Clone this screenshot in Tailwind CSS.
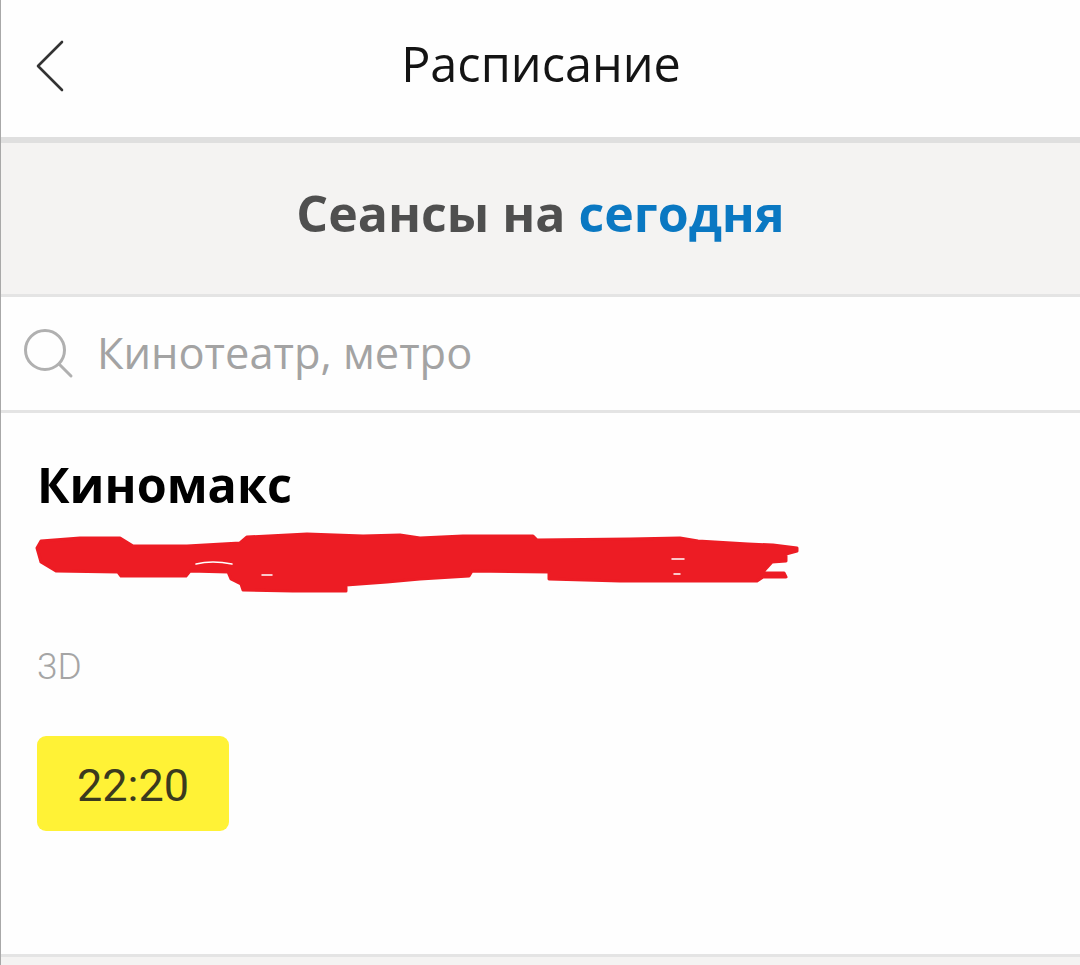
<!DOCTYPE html>
<html lang="ru"><head><meta charset="utf-8">
<script src="https://cdn.jsdelivr.net/npm/@tailwindcss/browser@4"></script>
</head>
<body class="bg-white">
<div class="h-[965px] w-[1080px] overflow-hidden flex flex-col border-l-[1px] border-[#a8a8a8] bg-[#fefefe] font-['Roboto',sans-serif]">
  <header class="h-[143px] shrink-0 flex items-center justify-center relative border-b-[6px] border-[#dfdfdf]">
    <svg class="absolute left-[34px] top-[39px]" width="30" height="54" viewBox="0 0 30 54" fill="none" stroke="#333" stroke-width="2.6" stroke-linecap="round" stroke-linejoin="round"><path d="M27 3 L3 27 L27 51"/></svg>
    <h1 class="font-['Open_Sans',sans-serif] text-[48.6px] leading-none text-[#141414] font-normal -mt-[10px] ml-[1px]">Расписание</h1>
  </header>
  <section class="h-[154px] shrink-0 bg-[#f4f3f2] border-b-[3px] border-[#e4e4e4] flex items-center justify-center">
    <h2 class="font-['Open_Sans',sans-serif] text-[50px] leading-none font-bold text-[#4f4f4f] -mt-[11px]">Сеансы на <span class="text-[#0a78c2]">сегодня</span></h2>
  </section>
  <div class="h-[116px] shrink-0 border-b-[3px] border-[#e4e4e4] flex items-center pl-[23px] gap-[23px]">
    <svg width="50" height="50" viewBox="0 0 50 50" fill="none" stroke="#b0b0b0" stroke-width="3" stroke-linecap="round"><circle cx="21" cy="21" r="19.5"/><path d="M35 35 L47 47"/></svg>
    <span class="font-['Open_Sans',sans-serif] text-[43.4px] leading-none text-[#a3a3a3] -mt-[2px]">Кинотеатр, метро</span>
  </div>
  <main class="flex-1 pl-[36px] pt-[45px] relative">
    <h3 class="font-['Open_Sans',sans-serif] text-[48.5px] leading-[52px] font-bold text-black">Киномакс</h3>
    <svg class="block ml-[-7px] mt-[15px]" width="780" height="75" viewBox="30 525 780 75" fill="none" stroke-linecap="round" stroke-linejoin="round">
      <path fill="#ed1c24" stroke="#ed1c24" stroke-width="3" d="M41 541 L80 538 L120 538 L133 546 L187 546 L240 543 L247 537 L307 534 L363 536 L400 535 L420 538 L463 536 L533 536 L537 540 L630 539 L680 538 L698 541 L748 544 L773 545 L797 548 L797 551 L786 554 L786 561 L772 562 L762 573 L784 573 L786 577 L763 577 L757 581 L620 581 L549 579 L549 572 L472 571 L469 576 L420 579 L387 582 L346 585 L346 591 L293 591 L243 590 L241 584 L231 579 L228 572 L190 571 L186 576 L121 576 L118 572 L56 571 L41 562 L37 548 Z"/>
      <path stroke="#ffffff" stroke-width="1.5" d="M196 564 Q212 560 232 564 M262 575 H272 M672 559 H684 M674 574 H680"/>
    </svg>
    <p class="mt-[47px] text-[37px] leading-[40px] text-[#a5a5a5] font-light">3D</p>
    <div class="mt-[49px] w-[192px] h-[95px] rounded-[9px] bg-[#fff236] flex items-center justify-center text-[45px] leading-none text-[#3b3a1e] pt-[4px]">22:20</div>
    <div class="absolute left-0 right-0 bottom-0 h-[11px] bg-[#f4f3f2] border-t-[3px] border-[#e4e4e4]"></div>
  </main>
</div>
</body></html>
